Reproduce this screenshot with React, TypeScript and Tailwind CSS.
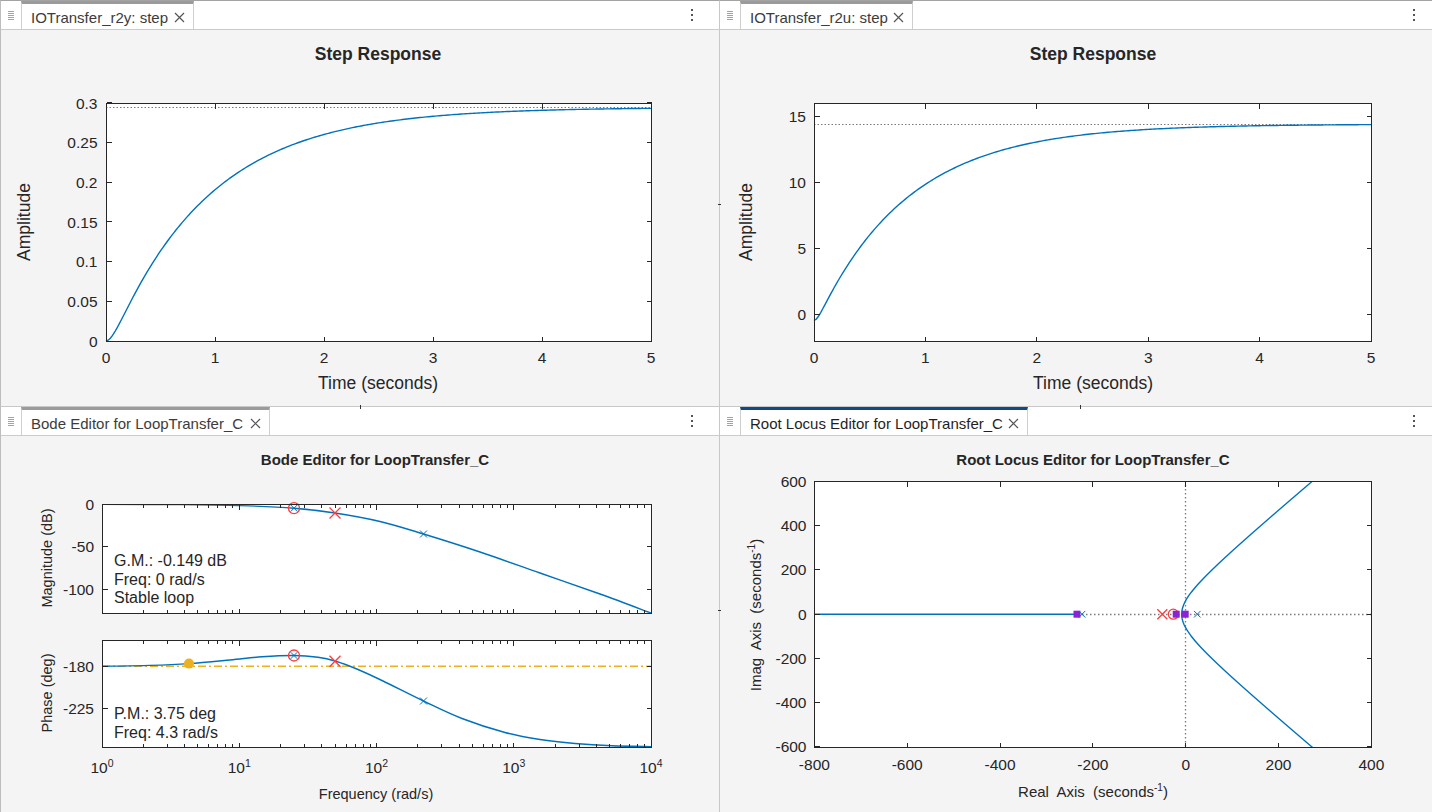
import React from 'react';
import clsx from 'clsx';

const BLUE = '#0072bd';
const INK = '#262626';
const RED = '#ff3b3b';
const PURPLE = '#8a22d6';
const ORANGE = '#edb120';
const GRID = '#7a7a7a';

type Pt = [number, number];
type Tick = { p: number; label?: string };

const snap = (v: number) => Math.round(v - 0.5) + 0.5;

function polyline(pts: Pt[]) {
  return pts.map((p, i) => `${i ? 'L' : 'M'}${p[0].toFixed(2)},${p[1].toFixed(2)}`).join('');
}

// catmull-rom through the points, emitted as cubic beziers
function smooth(pts: Pt[]) {
  let d = `M${pts[0][0]},${pts[0][1]}`;
  for (let i = 0; i < pts.length - 1; i++) {
    const p0 = pts[i - 1] || pts[i];
    const p1 = pts[i];
    const p2 = pts[i + 1];
    const p3 = pts[i + 2] || p2;
    const c1 = [p1[0] + (p2[0] - p0[0]) / 6, p1[1] + (p2[1] - p0[1]) / 6];
    const c2 = [p2[0] - (p3[0] - p1[0]) / 6, p2[1] - (p3[1] - p1[1]) / 6];
    d += `C${c1[0].toFixed(2)},${c1[1].toFixed(2)} ${c2[0].toFixed(2)},${c2[1].toFixed(2)} ${p2[0]},${p2[1]}`;
  }
  return d;
}

function Axes({
  x0, x1, y0, y1, xt, yt, minor = [], len = 5, minorLen = 3.5,
}: {
  x0: number; x1: number; y0: number; y1: number;
  xt: number[]; yt: number[]; minor?: number[]; len?: number; minorLen?: number;
}) {
  const l = snap(x0), r = snap(x1), t = snap(y0), b = snap(y1);
  return (
    <g stroke={INK} strokeWidth={1} fill="none" shapeRendering="crispEdges">
      <rect x={l} y={t} width={r - l} height={b - t} />
      {xt.map((x) => (
        <path key={`x${x}`} d={`M${snap(x)},${b}v${-len}M${snap(x)},${t}v${len}`} />
      ))}
      {minor.map((x) => (
        <path key={`m${x}`} d={`M${snap(x)},${b}v${-minorLen}M${snap(x)},${t}v${minorLen}`} />
      ))}
      {yt.map((y) => (
        <path key={`y${y}`} d={`M${l},${snap(y)}h${len}M${r},${snap(y)}h${-len}`} />
      ))}
    </g>
  );
}

function Cross({ x, y, r, color, w = 1.3 }: { x: number; y: number; r: number; color: string; w?: number }) {
  return (
    <path
      d={`M${x - r},${y - r}L${x + r},${y + r}M${x - r},${y + r}L${x + r},${y - r}`}
      stroke={color}
      strokeWidth={w}
      fill="none"
    />
  );
}

function Ring({ x, y, r, color }: { x: number; y: number; r: number; color: string }) {
  return <circle cx={x} cy={y} r={r} stroke={color} strokeWidth={1.3} fill="none" />;
}

function Grip() {
  return (
    <svg width="6" height="10" viewBox="0 0 6 10" className="block">
      {[0.5, 2.5, 4.5, 6.5, 8.5].map((y) => (
        <line key={y} x1="0" x2="6" y1={y} y2={y} stroke="#a3a3a3" strokeWidth="1" />
      ))}
    </svg>
  );
}

function CloseIcon() {
  return (
    <svg width="11" height="11" viewBox="0 0 11 11" className="block">
      <path d="M1 1L10 10M1 10L10 1" stroke="#555" strokeWidth="1.2" fill="none" />
    </svg>
  );
}

function Kebab() {
  return (
    <svg width="4" height="14" viewBox="0 0 4 14" className="block">
      {[2, 7, 12].map((y) => (
        <rect key={y} x="1" y={y - 1} width="2" height="2" fill="#555" />
      ))}
    </svg>
  );
}

function TabBar({ label, tabW, active, kebabRight }: { label: string; tabW: string; active?: boolean; kebabRight: string }) {
  return (
    <div className="flex h-[29px] items-stretch bg-white border-b border-[#cbcbcb]">
      <div className="flex w-[20px] items-center justify-center pt-[2px]">
        <Grip />
      </div>
      <div
        className={clsx(
          'flex items-center justify-between pl-[9px] pr-[8px] pt-[1px] bg-white border-x border-[#cfcfcf] border-t-[3px] text-[15px]',
          tabW,
          active ? 'border-t-[#0d4c86] text-[#1f1f1f]' : 'border-t-[#9b9b9b] text-[#3c3c3c]',
        )}
      >
        <span className="whitespace-nowrap leading-none">{label}</span>
        <CloseIcon />
      </div>
      <div className={clsx('ml-auto flex items-center', kebabRight)}>
        <Kebab />
      </div>
    </div>
  );
}

/* ---------- step response plots ---------- */

function stepCurve(f: (t: number) => number, xm: (t: number) => number, ym: (v: number) => number) {
  const pts: Pt[] = [];
  for (let i = 0; i <= 250; i++) {
    const t = (i / 250) * 5;
    pts.push([xm(t), ym(f(t))]);
  }
  return polyline(pts);
}

function StepLeft() {
  const xm = (t: number) => 106 + t * 109;
  const ym = (v: number) => 341 - (v / 0.3) * 238;
  const f = (t: number) =>
    0.2945 * (1 - (0.9 * Math.exp(-t / 0.9) - 0.06 * Math.exp(-t / 0.06)) / 0.84);
  const yl = ['0', '0.05', '0.1', '0.15', '0.2', '0.25', '0.3'];
  return (
    <svg width="718" height="376" viewBox="1 30 718 376" className="block">
      <rect x="106" y="103" width="545" height="238" fill="#fff" />
      <text x="378" y="54" textAnchor="middle" dominantBaseline="central" fontSize="17.5" fontWeight="bold" fill={INK}>
        Step Response
      </text>
      <line x1="106" x2="651" y1="107.5" y2="107.5" stroke={GRID} strokeDasharray="1.5 2" />
      <path d={stepCurve(f, xm, ym)} stroke={BLUE} strokeWidth="1.4" fill="none" />
      <Axes x0={106} x1={651} y0={103} y1={341} xt={[0, 1, 2, 3, 4, 5].map(xm)} yt={yl.map((_, i) => ym(i * 0.05))} />
      <g fill={INK} fontSize="15.5">
        {yl.map((s, i) => (
          <text key={s} x="97.5" y={ym(i * 0.05)} textAnchor="end" dominantBaseline="central">{s}</text>
        ))}
        {[0, 1, 2, 3, 4, 5].map((t) => (
          <text key={t} x={xm(t)} y="357" textAnchor="middle" dominantBaseline="central">{t}</text>
        ))}
      </g>
      <text x="378" y="383" textAnchor="middle" dominantBaseline="central" fontSize="17.5" fill={INK}>
        Time (seconds)
      </text>
      <text x="24" y="222" transform="rotate(-90 24 222)" textAnchor="middle" dominantBaseline="central" fontSize="17.5" fill={INK}>
        Amplitude
      </text>
    </svg>
  );
}

function StepRight() {
  const xm = (t: number) => 814 + t * 111.4;
  const ym = (v: number) => 341 - (v + 2) * (238 / 18);
  const f = (t: number) =>
    14.4 - 14.85 * (0.82 * Math.exp(-t / 0.82) - 0.03 * Math.exp(-t / 0.03)) / 0.79;
  return (
    <svg width="712" height="376" viewBox="720 30 712 376" className="block">
      <rect x="814" y="103" width="557" height="238" fill="#fff" />
      <text x="1093" y="54" textAnchor="middle" dominantBaseline="central" fontSize="17.5" fontWeight="bold" fill={INK}>
        Step Response
      </text>
      <line x1="814" x2="1371" y1={snap(ym(14.4))} y2={snap(ym(14.4))} stroke={GRID} strokeDasharray="1.5 2" />
      <path d={stepCurve(f, xm, ym)} stroke={BLUE} strokeWidth="1.4" fill="none" />
      <Axes x0={814} x1={1371} y0={103} y1={341} xt={[0, 1, 2, 3, 4, 5].map(xm)} yt={[0, 5, 10, 15].map(ym)} />
      <g fill={INK} fontSize="15.5">
        {[0, 5, 10, 15].map((v) => (
          <text key={v} x="806" y={ym(v)} textAnchor="end" dominantBaseline="central">{v}</text>
        ))}
        {[0, 1, 2, 3, 4, 5].map((t) => (
          <text key={t} x={xm(t)} y="357" textAnchor="middle" dominantBaseline="central">{t}</text>
        ))}
      </g>
      <text x="1093" y="383" textAnchor="middle" dominantBaseline="central" fontSize="17.5" fill={INK}>
        Time (seconds)
      </text>
      <text x="746" y="222" transform="rotate(-90 746 222)" textAnchor="middle" dominantBaseline="central" fontSize="17.5" fill={INK}>
        Amplitude
      </text>
    </svg>
  );
}

/* ---------- bode editor ---------- */

const DEC = 137.25;
const wx = (w: number) => 102 + DEC * Math.log10(w);

const magPts: Pt[] = [
  [102, 504.4], [180, 504.6], [240, 505.6], [294, 508.2], [335, 513], [380, 521.5],
  [423.5, 534], [480, 552], [540, 573], [600, 594], [651, 613],
];

const phasePts: Pt[] = [
  [102, 666.3], [150, 665.4], [189, 663.6], [230, 660], [262, 656.8], [294, 655.5],
  [318, 657.3], [335, 661], [358, 669.5], [383, 681], [423.5, 701], [462, 718.5],
  [505, 732.5], [540, 739.5], [575, 743.5], [612, 745.8], [651, 746.6],
];

function BodeEditor() {
  const majors = [0, 1, 2, 3, 4].map((d) => 102 + d * DEC);
  const minors: number[] = [];
  for (let d = 0; d < 4; d++) for (let k = 2; k <= 9; k++) minors.push(102 + DEC * (d + Math.log10(k)));
  const magY = (v: number) => 504.5 - (v / 50) * 42.3;
  const phY = (v: number) => 666.3 - ((v + 180) / 45) * 42.5;
  return (
    <svg width="718" height="376" viewBox="1 436 718 376" className="block">
      <defs>
        <clipPath id="bodeMag"><rect x="102" y="504" width="549" height="109" /></clipPath>
        <clipPath id="bodePh"><rect x="102" y="640" width="549" height="107" /></clipPath>
      </defs>
      <rect x="102" y="504" width="549" height="109" fill="#fff" />
      <rect x="102" y="640" width="549" height="107" fill="#fff" />
      <text x="375" y="459" textAnchor="middle" dominantBaseline="central" fontSize="15" fontWeight="bold" fill={INK}>
        Bode Editor for LoopTransfer_C
      </text>

      <g clipPath="url(#bodeMag)">
        <path d={smooth(magPts)} stroke={BLUE} strokeWidth="1.4" fill="none" />
      </g>
      <Ring x={294} y={508.2} r={5.5} color={RED} />
      <Cross x={294} y={508.2} r={3.3} color={BLUE} w={1} />
      <Cross x={335} y={513} r={5.5} color={RED} />
      <Cross x={423.5} y={534} r={3.5} color={BLUE} w={1} />
      <Axes x0={102} x1={651} y0={504} y1={613} xt={majors} minor={minors} yt={[0, -50, -100].map(magY)} />

      <line x1="102" x2="651" y1="666.3" y2="666.3" stroke={ORANGE} strokeWidth="1.5" strokeDasharray="8 3 2 3" />
      <g clipPath="url(#bodePh)">
        <path d={smooth(phasePts)} stroke={BLUE} strokeWidth="1.4" fill="none" />
      </g>
      <circle cx={wx(4.3)} cy="663.6" r="5" fill={ORANGE} />
      <Ring x={294} y={655.5} r={5.5} color={RED} />
      <Cross x={294} y={655.5} r={3.3} color={BLUE} w={1} />
      <Cross x={335} y={661.3} r={5.5} color={RED} />
      <Cross x={423.5} y={701} r={3.5} color={BLUE} w={1} />
      <Axes x0={102} x1={651} y0={640} y1={747} xt={majors} minor={minors} yt={[-180, -225].map(phY)} />

      <g fill={INK} fontSize="15.5">
        {[0, -50, -100].map((v) => (
          <text key={v} x="94" y={magY(v)} textAnchor="end" dominantBaseline="central">{v}</text>
        ))}
        {[-180, -225].map((v) => (
          <text key={v} x="94" y={phY(v)} textAnchor="end" dominantBaseline="central">{v}</text>
        ))}
        {majors.map((x, i) => (
          <text key={i} x={x} y="772.5" textAnchor="middle">
            10<tspan fontSize="10.5" dy="-6">{i}</tspan>
          </text>
        ))}
      </g>
      <g fill={INK} fontSize="16">
        <text x="114" y="566">G.M.: -0.149 dB</text>
        <text x="114" y="584.5">Freq: 0 rad/s</text>
        <text x="114" y="603">Stable loop</text>
        <text x="114" y="719">P.M.: 3.75 deg</text>
        <text x="114" y="737.5">Freq: 4.3 rad/s</text>
      </g>
      <text x="376" y="794" textAnchor="middle" dominantBaseline="central" fontSize="14.5" fill={INK}>
        Frequency (rad/s)
      </text>
      <text x="47" y="558" transform="rotate(-90 47 558)" textAnchor="middle" dominantBaseline="central" fontSize="14.5" fill={INK}>
        Magnitude (dB)
      </text>
      <text x="47" y="693" transform="rotate(-90 47 693)" textAnchor="middle" dominantBaseline="central" fontSize="14.5" fill={INK}>
        Phase (deg)
      </text>
    </svg>
  );
}

/* ---------- root locus editor ---------- */

function RootLocus() {
  const rx = (v: number) => 1185.7 + v * (557 / 1200);
  const ry = (v: number) => 614.2 - v * (265.5 / 1200);
  const y0 = ry(0);
  const branch: Pt[] = [];
  for (let dy = -136; dy <= 136; dy += 2) {
    branch.push([1181.7 + 31 * (Math.sqrt(1 + (dy / 26) ** 2) - 1), y0 + dy]);
  }
  const xs = [-800, -600, -400, -200, 0, 200, 400];
  const ys = [600, 400, 200, 0, -200, -400, -600];
  return (
    <svg width="712" height="376" viewBox="720 436 712 376" className="block">
      <defs>
        <clipPath id="rlBox"><rect x="814" y="481" width="557" height="266" /></clipPath>
      </defs>
      <rect x="814" y="481" width="557" height="266" fill="#fff" />
      <text x="1093" y="459" textAnchor="middle" dominantBaseline="central" fontSize="15" fontWeight="bold" fill={INK}>
        Root Locus Editor for LoopTransfer_C
      </text>
      <line x1={snap(rx(0))} x2={snap(rx(0))} y1="481" y2="747" stroke={GRID} strokeWidth="1.3" strokeDasharray="1.5 2.5" />
      <line x1="1082" x2="1371" y1={snap(y0)} y2={snap(y0)} stroke={GRID} strokeWidth="1.3" strokeDasharray="1.5 2.5" />
      <line x1="814" x2="1077" y1={y0} y2={y0} stroke={BLUE} strokeWidth="1.5" />
      <g clipPath="url(#rlBox)">
        <path d={polyline(branch)} stroke={BLUE} strokeWidth="1.4" fill="none" />
      </g>
      <rect x="1073.5" y={y0 - 3.5} width="7" height="7" fill={PURPLE} />
      <Cross x={1082} y={y0} r={3.3} color={BLUE} w={1} />
      <Cross x={1162.3} y={y0} r={5} color={RED} />
      <Ring x={1173.3} y={y0} r={5} color={RED} />
      <rect x="1172.7" y={y0 - 3.5} width="7" height="7" fill={PURPLE} />
      <rect x="1181.7" y={y0 - 3.5} width="7" height="7" fill={PURPLE} />
      <Cross x={1197.3} y={y0} r={3.3} color={BLUE} w={1} />
      <Axes x0={814} x1={1371} y0={481} y1={747} xt={xs.map(rx)} yt={ys.map(ry)} />
      <g fill={INK} fontSize="15.5">
        {ys.map((v) => (
          <text key={v} x="806.5" y={ry(v)} textAnchor="end" dominantBaseline="central">{v}</text>
        ))}
        {xs.map((v) => (
          <text key={v} x={rx(v)} y="764.5" textAnchor="middle" dominantBaseline="central">{v}</text>
        ))}
      </g>
      <text x="1093" y="797" textAnchor="middle" fontSize="15" fill={INK} className="whitespace-pre">
        {'Real  Axis  (seconds'}
        <tspan fontSize="10" dy="-6">-1</tspan>
        <tspan dy="6">)</tspan>
      </text>
      <text x="761" y="615" transform="rotate(-90 761 615)" textAnchor="middle" fontSize="15" fill={INK} className="whitespace-pre">
        {'Imag  Axis  (seconds'}
        <tspan fontSize="10" dy="-6">-1</tspan>
        <tspan dy="6">)</tspan>
      </text>
    </svg>
  );
}

export default function App() {
  return (
    <div className="relative grid w-[1432px] h-[812px] grid-cols-[720px_712px] grid-rows-[407px_405px] bg-white font-['Liberation_Sans',Arial,sans-serif] overflow-hidden">
      {/* top left */}
      <div className="flex flex-col bg-[#f4f4f4] border-t border-l border-r border-b border-t-[#a3a3a3] border-l-[#bdbdbd] border-r-[#c8c8c8] border-b-[#c8c8c8]">
        <TabBar label="IOTransfer_r2y: step" tabW="w-[173px]" kebabRight="mr-[25px]" />
        <StepLeft />
      </div>
      {/* top right */}
      <div className="flex flex-col bg-[#f4f4f4] border-t border-b border-t-[#a3a3a3] border-b-[#c8c8c8]">
        <TabBar label="IOTransfer_r2u: step" tabW="w-[173px]" kebabRight="mr-[16px]" />
        <StepRight />
      </div>
      {/* bottom left */}
      <div className="flex flex-col bg-[#f4f4f4] border-l border-r border-l-[#bdbdbd] border-r-[#c8c8c8]">
        <TabBar label="Bode Editor for LoopTransfer_C" tabW="w-[249px]" kebabRight="mr-[25px]" />
        <BodeEditor />
      </div>
      {/* bottom right */}
      <div className="flex flex-col bg-[#f4f4f4]">
        <TabBar label="Root Locus Editor for LoopTransfer_C" tabW="w-[288px]" active kebabRight="mr-[16px]" />
        <RootLocus />
      </div>

      {/* splitter grips */}
      <span className="absolute left-[360px] top-[405px] w-px h-[4px] bg-[#333]" />
      <span className="absolute left-[1080px] top-[405px] w-px h-[4px] bg-[#333]" />
      <span className="absolute left-[718px] top-[204px] w-[3px] h-px bg-[#333]" />
      <span className="absolute left-[718px] top-[610px] w-[3px] h-px bg-[#333]" />
    </div>
  );
}
